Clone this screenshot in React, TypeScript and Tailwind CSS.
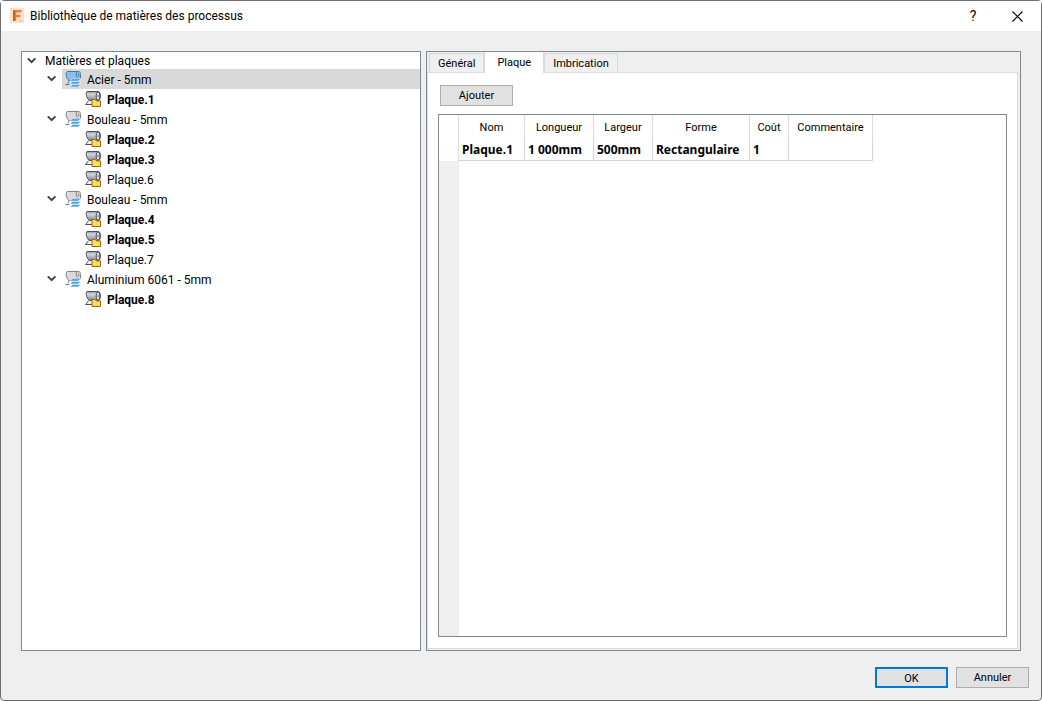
import { useState } from "react";

interface Plate {
  name: string;
  bold: boolean;
}

interface Material {
  id: string;
  name: string;
  plates: Plate[];
}

const materials: Material[] = [
  { id: "acier", name: "Acier - 5mm", plates: [{ name: "Plaque.1", bold: true }] },
  {
    id: "bouleau-1",
    name: "Bouleau - 5mm",
    plates: [
      { name: "Plaque.2", bold: true },
      { name: "Plaque.3", bold: true },
      { name: "Plaque.6", bold: false },
    ],
  },
  {
    id: "bouleau-2",
    name: "Bouleau - 5mm",
    plates: [
      { name: "Plaque.4", bold: true },
      { name: "Plaque.5", bold: true },
      { name: "Plaque.7", bold: false },
    ],
  },
  { id: "alu", name: "Aluminium 6061 - 5mm", plates: [{ name: "Plaque.8", bold: true }] },
];

const tabs = ["Général", "Plaque", "Imbrication"];

const columns = [
  { title: "Nom", value: "Plaque.1", width: "w-[66px]" },
  { title: "Longueur", value: "1 000mm", width: "w-[69px]" },
  { title: "Largeur", value: "500mm", width: "w-[59px]" },
  { title: "Forme", value: "Rectangulaire", width: "w-[97px]" },
  { title: "Coût", value: "1", width: "w-[39px]" },
  { title: "Commentaire", value: "", width: "w-[84px]" },
];

function Chevron({ open }: { open: boolean }) {
  return (
    <svg viewBox="0 0 10 10" className={`size-[10px] ${open ? "" : "-rotate-90"}`} fill="none" stroke="#404040" strokeWidth="1.9">
      <path d="M.8 2.4 L4.6 6.2 L8.4 2.4" />
    </svg>
  );
}

function MaterialIcon({ selected }: { selected: boolean }) {
  const fill = selected ? "#8fbfe4" : "#dadada";
  const stroke = selected ? "#3f78a8" : "#808080";
  return (
    <svg viewBox="0 0 16 16" className="size-4 shrink-0">
      <path d="M2.2.5h11.6c1.2.2 1.7 1.4 1.7 3.2v4H13V9.5H4.8C1.6 9.5 0 1.6 2.2.5z" fill={fill} stroke={stroke} />
      <path d="M12 1c-1.2 1-1 4.6.4 5.4M13.6 2.6v2.8" fill="none" stroke={stroke} />
      <path d="M3.4 9.4c.6 1.2.2 2.4-1 3.2M.4 13.5h4.2" fill="none" stroke={stroke} />
      <path d="M5 10.2l2.6-2.6H16l-3 2.6z" fill="#54a3dc" stroke="#f4f9fd" strokeWidth=".5" />
      <path d="M5 13.1l2.6-2.6H16l-3 2.6z" fill="#54a3dc" stroke="#f4f9fd" strokeWidth=".5" />
      <path d="M5 16l2.6-2.6H16L13 16z" fill="#54a3dc" stroke="#f4f9fd" strokeWidth=".5" />
    </svg>
  );
}

function PlateIcon() {
  return (
    <svg viewBox="0 0 16 16" className="size-4 shrink-0">
      <defs>
        <linearGradient id="roll" x1="0" y1="0" x2="0" y2="1">
          <stop offset="0" stopColor="#8a8e98" />
          <stop offset=".3" stopColor="#d4d8df" />
          <stop offset="1" stopColor="#80848f" />
        </linearGradient>
      </defs>
      <path d="M4 9L.6 13.5H7V9z" fill="#f2f3f5" />
      <path d="M3.6 9.6L.6 13.5H7" fill="none" stroke="#4c4f57" />
      <path d="M2 .5h11.6c2.4.4 2.4 8.6 0 9H5C1.8 9 .2 1.6 2 .5z" fill="url(#roll)" stroke="#4c4f57" />
      <ellipse cx="13" cy="5" rx="1.9" ry="4" fill="#eceef1" stroke="#4c4f57" />
      <ellipse cx="13" cy="5" rx=".5" ry="1.6" fill="#4c4f57" />
      <path d="M7 8.5h3.4l1 1.4h4.1v5.6H7z" fill="#ffdf5a" stroke="#9c641c" />
    </svg>
  );
}

function AppIcon() {
  return (
    <svg viewBox="0 0 16 16" className="size-4 shrink-0">
      <path d="M1 0h14v15H1z" fill="#fbe0ca" />
      <path d="M0 5h1v10H0z" fill="#fdeee2" />
      <path d="M4 2h8.4v2.6H7.2v2.2h4.2v2.4H7.2V13H4z" fill="#e38435" />
      <path d="M4 2h2v11H4z" fill="#bf6823" />
      <path d="M10.4 12.2H13v.9h-2.6z" fill="#e9a878" />
    </svg>
  );
}

export default function App() {
  const [selected, setSelected] = useState("acier");
  const [activeTab, setActiveTab] = useState("Plaque");
  const [closed, setClosed] = useState<string[]>([]);

  const toggle = (id: string) => {
    setClosed((prev) => (prev.includes(id) ? prev.filter((c) => c !== id) : [...prev, id]));
  };

  const rootOpen = !closed.includes("root");

  return (
    <div className="flex min-h-screen flex-col rounded-[4px] border border-[#6e6e6e] bg-[#efefef] font-[Roboto,'Noto_Sans',sans-serif] text-[12px] text-black">
      <header className="flex h-[30px] shrink-0 items-center bg-white pr-3 pl-2">
        <AppIcon />
        <h1 className="ml-[5px] flex-1">Bibliothèque de matières des processus</h1>
        <button type="button" aria-label="Aide" className="mr-5 flex size-6 items-center justify-center text-[14px]">
          ?
        </button>
        <button type="button" aria-label="Fermer" className="flex size-6 items-center justify-center">
          <svg viewBox="0 0 11 11" className="size-[11px]" stroke="#000" strokeWidth="1.1">
            <path d="M.5.5l10 10M10.5.5l-10 10" />
          </svg>
        </button>
      </header>

      <main className="grid flex-1 grid-cols-[400fr_595fr] gap-[5px] px-5 pt-5">
        <nav className="border border-[#828790] bg-white" aria-label="Matières et plaques">
          <div className="flex h-[17px] items-center pl-[5px]">
            <button type="button" aria-label="Développer" onClick={() => toggle("root")}>
              <Chevron open={rootOpen} />
            </button>
            <span className="ml-2 leading-4">Matières et plaques</span>
          </div>
          {rootOpen && (
            <ul>
              {materials.map((material) => {
                const open = !closed.includes(material.id);
                return (
                  <li key={material.id}>
                    <div className="flex h-5 items-center pl-[25px]">
                      <button type="button" aria-label="Développer" onClick={() => toggle(material.id)}>
                        <Chevron open={open} />
                      </button>
                      <button
                        type="button"
                        onClick={() => setSelected(material.id)}
                        className={`ml-[5px] flex h-5 flex-1 items-center gap-[6px] pl-[3px] ${
                          selected === material.id ? "bg-[#d9d9d9]" : ""
                        }`}
                      >
                        <MaterialIcon selected={selected === material.id} />
                        <span className="pt-px">{material.name}</span>
                      </button>
                    </div>
                    {open && (
                      <ul>
                        {material.plates.map((plate) => (
                          <li key={plate.name} className="flex h-5 items-center gap-[6px] pl-[63px]">
                            <PlateIcon />
                            <span className={plate.bold ? "pt-px font-bold" : "pt-px"}>{plate.name}</span>
                          </li>
                        ))}
                      </ul>
                    )}
                  </li>
                );
              })}
            </ul>
          )}
        </nav>

        <section className="flex flex-col border border-[#828790] pr-[2px] pb-px text-[11px]">
          <div role="tablist" className="flex h-5 items-end pl-[2px]">
            {tabs.map((tab) => (
              <button
                key={tab}
                type="button"
                role="tab"
                aria-selected={tab === activeTab}
                onClick={() => setActiveTab(tab)}
                className={
                  tab === activeTab
                    ? "z-10 -mb-px h-[21px] border-x border-[#d9d9d9] bg-white px-3 pt-px"
                    : "h-[19px] border border-b-0 border-[#d9d9d9] px-2 pt-[2px]"
                }
              >
                {tab}
              </button>
            ))}
          </div>
          <div role="tabpanel" className="flex flex-1 flex-col items-start border border-[#dcdcdc] bg-white px-[10px] pt-3 pb-[11px]">
            <button type="button" className="ml-[2px] h-[21px] w-[73px] border border-[#adadad] bg-[#e1e1e1] pt-[2px]">
              Ajouter
            </button>
            <div className="mt-2 flex w-full flex-1 flex-col border border-[#828790]">
              <table className="w-[434px] table-fixed border-separate border-spacing-0">
                <thead>
                  <tr className="h-6">
                    <td className="w-5 border-r border-[#dcdcdc]" />
                    {columns.map((column) => (
                      <th key={column.title} className={`${column.width} border-r border-[#dcdcdc] pt-[2px] font-normal`}>
                        {column.title}
                      </th>
                    ))}
                  </tr>
                </thead>
                <tbody>
                  <tr className="h-[22px]">
                    <td className="border-r border-[#dcdcdc]" />
                    {columns.map((column) => (
                      <td
                        key={column.title}
                        className="border-r border-b border-[#d4d4d4] pl-[3px] font-['Noto_Sans',sans-serif] text-[12px] font-bold whitespace-nowrap"
                      >
                        {column.value}
                      </td>
                    ))}
                  </tr>
                </tbody>
              </table>
              <div className="w-5 flex-1 bg-[#efefef]" />
            </div>
          </div>
        </section>
      </main>

      <footer className="flex shrink-0 justify-end gap-2 pt-4 pr-3 pb-3 text-[11px]">
        <button type="button" className="h-[21px] w-[73px] border-2 border-[#0078d7] bg-[#e1e1e1] pt-[2px]">
          OK
        </button>
        <button type="button" className="h-[21px] w-[73px] border border-[#adadad] bg-[#e1e1e1] pt-[2px]">
          Annuler
        </button>
      </footer>
    </div>
  );
}
